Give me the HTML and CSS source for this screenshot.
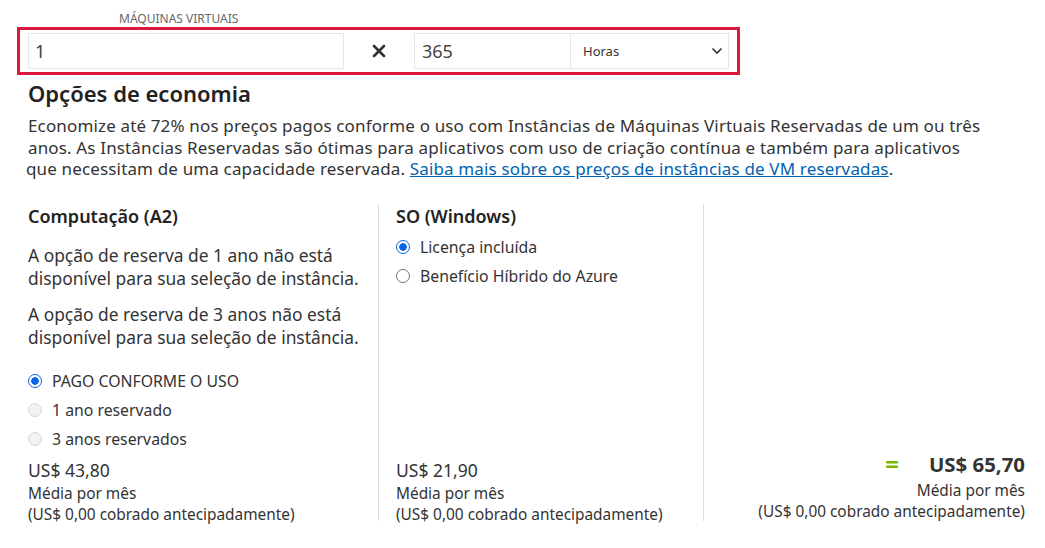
FILE: index.html
```html
<!DOCTYPE html>
<html lang="pt">
<head>
<meta charset="utf-8">
<link rel="stylesheet" href="styles.css">
</head>
<body>
<div class="page">
  <div class="vm-label">MÁQUINAS VIRTUAIS</div>
  <div class="calc-box">
    <div class="field field-count">1</div>
    <div class="times">
      <svg width="14" height="14" viewBox="0 0 14 14"><path d="M2 2 L12 12 M12 2 L2 12" stroke="#333" stroke-width="2.6" stroke-linecap="round"/></svg>
    </div>
    <div class="field field-hours">365</div>
    <div class="field field-select">
      <span>Horas</span>
      <svg width="12" height="8" viewBox="0 0 12 8"><path d="M1.5 1.5 L6 6 L10.5 1.5" fill="none" stroke="#333" stroke-width="1.6"/></svg>
    </div>
  </div>

  <h2 class="title">Opções de economia</h2>
  <p class="intro">Economize até 72% nos preços pagos conforme o uso com Instâncias de Máquinas Virtuais Reservadas de um ou três<br>anos. As Instâncias Reservadas são ótimas para aplicativos com uso de criação contínua e também para aplicativos<br><span class="shift">que necessitam de uma capacidade reservada. <a href="#">Saiba mais sobre os preços de instâncias de VM reservadas</a>.</span></p>

  <div class="columns">
    <div class="col col-compute">
      <h3 class="col-title">Computação (A2)</h3>
      <p class="note">A opção de reserva de 1 ano não está disponível para sua seleção de instância.</p>
      <p class="note">A opção de reserva de 3 anos não está disponível para sua seleção de instância.</p>
      <ul class="radios radios-compute">
        <li><span class="radio checked"></span>PAGO CONFORME O USO</li>
        <li><span class="radio disabled"></span>1 ano reservado</li>
        <li><span class="radio disabled"></span>3 anos reservados</li>
      </ul>
      <div class="price">
        <div class="amount">US$ 43,80</div>
        <div class="sub">Média por mês</div>
        <div class="sub">(US$ 0,00 cobrado antecipadamente)</div>
      </div>
    </div>
    <div class="col col-os">
      <h3 class="col-title">SO (Windows)</h3>
      <ul class="radios">
        <li><span class="radio checked"></span>Licença incluída</li>
        <li><span class="radio"></span>Benefício Híbrido do Azure</li>
      </ul>
      <div class="price">
        <div class="amount">US$ 21,90</div>
        <div class="sub">Média por mês</div>
        <div class="sub">(US$ 0,00 cobrado antecipadamente)</div>
      </div>
    </div>
    <div class="col col-total">
      <div class="price total">
        <div class="amount-row"><span class="equals">=</span><span class="amount-total">US$ 65,70</span></div>
        <div class="sub">Média por mês</div>
        <div class="sub">(US$ 0,00 cobrado antecipadamente)</div>
      </div>
    </div>
  </div>
</div>
</body>
</html>
```
FILE: styles.css
```css
* { box-sizing: border-box; }
html, body { margin: 0; padding: 0; background: #fff; }
body {
  font-family: "Noto Sans", "Open Sans", "DejaVu Sans", sans-serif;
  color: #333;
  width: 1045px;
  height: 548px;
  overflow: hidden;
}
.page { padding: 11px 0 0 0; }
.vm-label {
  margin-left: 119px;
  font-size: 12px;
  line-height: 16px;
  color: #666;
}
.calc-box {
  margin-left: 17px;
  width: 723px;
  height: 48px;
  border: 3px solid #d9183b;
  display: flex;
  align-items: center;
  padding: 0 0 0 8px;
}
.field {
  height: 36px;
  border: 1px solid #e6e6e6;
  display: flex;
  align-items: center;
  color: #444;
}
.field-count { width: 316px; padding-left: 6px; font-size: 18px; }
.times { width: 70px; display: flex; justify-content: center; align-items: center; }
.field-hours { width: 157px; padding-left: 7px; font-size: 18px; }
.field-select {
  width: 158px;
  border-left: none;
  padding: 0 5px 0 12px;
  justify-content: space-between;
  font-size: 13px;
  color: #333;
}
.title {
  margin: 4px 0 0 28px;
  font-size: 22px;
  line-height: 28px;
  font-weight: 600;
  color: #222;
}
.intro {
  margin: 8px 0 0 28px;
  font-size: 17px;
  letter-spacing: 0.15px;
  line-height: 21.5px;
  color: #333;
}
.intro .shift { margin-left: -2px; }
.intro a { color: #0063b1; text-decoration: underline; }
.columns {
  display: flex;
  margin: 24px 0 0 28px;
  height: 317px;
}
.col { display: flex; flex-direction: column; }
.col-compute { width: 351px; border-right: 1px solid #ddd; padding-right: 8px; }
.col-os { width: 325px; border-right: 1px solid #ddd; padding-left: 17px; }
.col-total { width: 322px; align-items: flex-end; }
.col-title {
  margin: 0;
  font-size: 18px;
  line-height: 24px;
  font-weight: 600;
  color: #222;
}
.note {
  margin: 16.5px 0 0 0;
  font-size: 17.4px;
  line-height: 22.5px;
  color: #333;
}
.note + .note { margin-top: 14px; }
.radios { list-style: none; margin: 4.5px 0 0 0; padding: 0; font-size: 15.8px; color: #333; }
.radios-compute { margin-top: 18px; }
.radios li { display: flex; align-items: center; height: 29px; }
.radio {
  width: 14px; height: 14px;
  border-radius: 50%;
  border: 1px solid #767676;
  margin-right: 10px;
  flex: none;
  background: #fff;
}
.radio.checked {
  border: 1px solid #0a64e8;
  background: radial-gradient(circle, #0a64e8 0 3.5px, #fff 4px);
}
.radio.disabled { border-color: #d8d8d8; background: #f2f2f2; }
.price { margin-top: auto; margin-bottom: -4.5px; }
.amount { font-size: 17.5px; line-height: 25px; color: #333; }
.sub { font-size: 15.4px; line-height: 21px; color: #333; }
.total { text-align: right; margin-bottom: -1px; padding-right: 1px; }
.amount-row { display: flex; justify-content: flex-end; align-items: center; height: 28px; margin-bottom: 2px; }
.equals { color: #7ab800; font-weight: 700; font-size: 24px; margin-right: 30px; }
.amount-total { font-size: 20.4px; font-weight: 700; color: #333; }
```
